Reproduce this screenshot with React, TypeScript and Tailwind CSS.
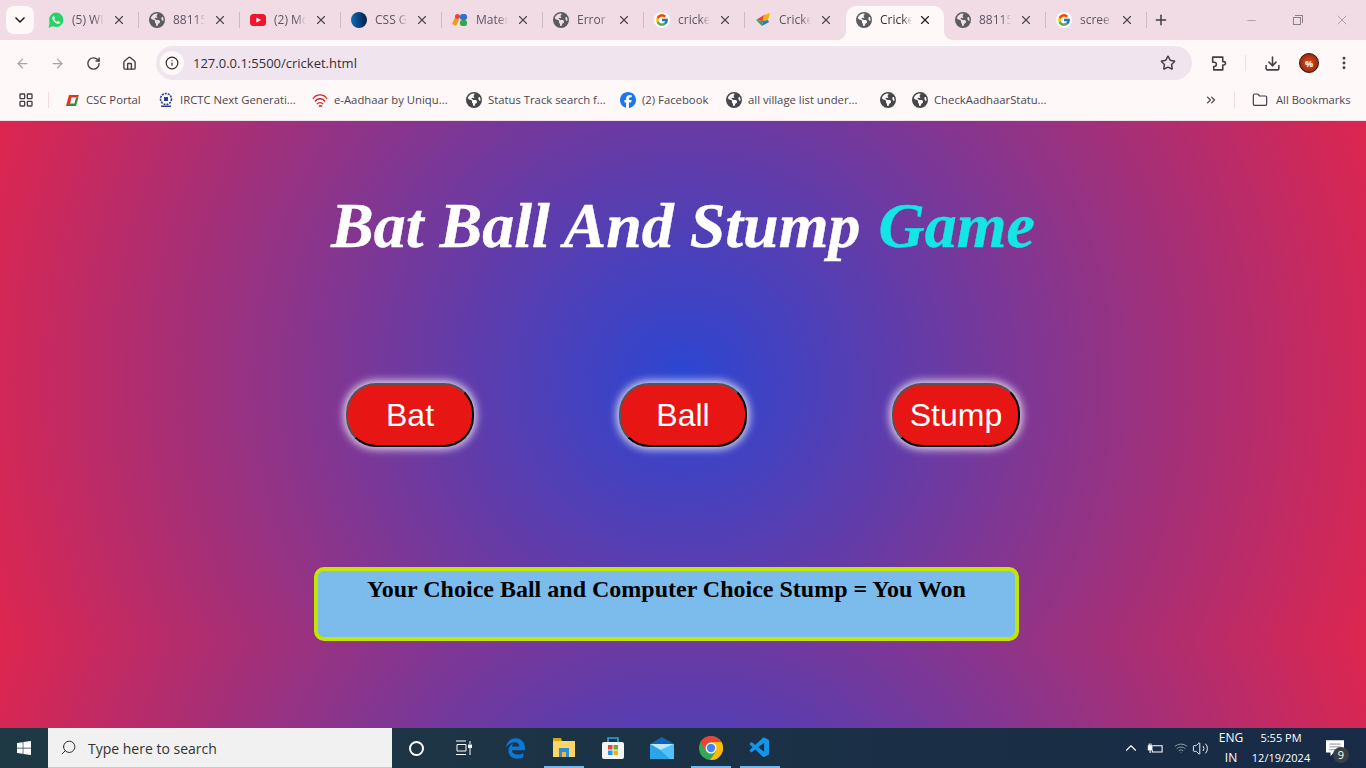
import type { ReactNode } from 'react';
import { FaEarthAmericas, FaFacebook, FaWindows, FaEdgeLegacy } from 'react-icons/fa6';
import { FcGoogle } from 'react-icons/fc';
import { VscVscode } from 'react-icons/vsc';
import {
  ArrowLeft,
  ArrowRight,
  RotateCw,
  Home,
  Info,
  Star,
  Download,
  EllipsisVertical,
  ChevronDown,
  ChevronUp,
  ChevronsRight,
  X,
  Plus,
  Minus,
  Folder,
  LayoutGrid,
  Search,
  Volume2,
  Wifi,
} from 'lucide-react';

const uiFont = "font-['Open_Sans','Noto_Sans',sans-serif]";

function Globe({ tab }: { tab?: boolean }) {
  return <FaEarthAmericas className={`w-4 h-4 shrink-0 ${tab ? 'text-[#5a5c60]' : 'text-[#45474b]'}`} />;
}

function WhatsappIcon() {
  return (
    <svg viewBox="0 0 16 16" className="w-4 h-4 shrink-0">
      <circle cx="8.2" cy="7.8" r="7.2" fill="#25d366" />
      <path d="M0.5 15.8 L1.8 10.5 L5.5 14 Z" fill="#25d366" />
      <path
        d="M5.6 4 C5 4.2 4.2 5 4.4 6.4 C4.7 8.4 7.4 11.2 9.6 11.7 C11 12 11.9 11 12 10.4 C12.1 9.9 10.5 9 10 9 C9.6 9 9.3 9.9 8.9 9.8 C8.1 9.6 6.6 8 6.4 7.2 C6.3 6.8 7.1 6.5 7.1 6.1 C7.1 5.6 6.2 3.9 5.6 4 Z"
        fill="#fff"
      />
    </svg>
  );
}

function YoutubeIcon() {
  return (
    <svg viewBox="0 0 16 16" className="w-4 h-4 shrink-0">
      <rect x="0" y="2" width="16" height="12" rx="3.5" fill="#f0142f" />
      <path d="M6.4 5.4 L11 8 L6.4 10.6 Z" fill="#fff" />
    </svg>
  );
}

function GoogleIcon() {
  return (
    <span className="w-4 h-4 rounded-full bg-white flex items-center justify-center shrink-0">
      <FcGoogle className="w-[14px] h-[14px]" />
    </span>
  );
}

function MaterialIcon() {
  return (
    <svg viewBox="0 0 16 16" className="w-4 h-4 shrink-0">
      <path d="M0 12 L4 3 L7 8 L4 14 Z" fill="#f59a1b" />
      <circle cx="5.5" cy="4.5" r="2.5" fill="#e8453c" />
      <rect x="8" y="2" width="7" height="6" rx="2.5" fill="#2d6fd6" />
      <rect x="8" y="8" width="7" height="6" rx="2.5" fill="#2ea44f" />
    </svg>
  );
}

function CrickIcon() {
  return (
    <svg viewBox="0 0 16 16" className="w-4 h-4 shrink-0">
      <path d="M1 8 L9 3 L8 9 Z" fill="#e8453c" />
      <path d="M9 3 L15 1 L13 8 L8 9 Z" fill="#f4b400" />
      <path d="M1 8 L8 9 L7 14 Z" fill="#3fa34d" />
      <path d="M8 9 L13 8 L14 10 L7 14 Z" fill="#1e7fc4" />
    </svg>
  );
}

const tabs: { icon: ReactNode; title: string; active?: boolean }[] = [
  { icon: <WhatsappIcon />, title: '(5) WI' },
  { icon: <Globe tab />, title: '88115' },
  { icon: <YoutubeIcon />, title: '(2) Mo' },
  { icon: <span className="w-4 h-4 rounded-full bg-gradient-to-r from-[#0f6cb8] to-[#03204a] shrink-0" />, title: 'CSS G' },
  { icon: <MaterialIcon />, title: 'Mater' },
  { icon: <Globe tab />, title: 'Error' },
  { icon: <GoogleIcon />, title: 'cricke' },
  { icon: <CrickIcon />, title: 'Cricke' },
  { icon: <Globe tab />, title: 'Cricke', active: true },
  { icon: <Globe tab />, title: '88115' },
  { icon: <GoogleIcon />, title: 'scree' },
];

function Tab({ icon, title, active }: { icon: ReactNode; title: string; active?: boolean }) {
  return (
    <div
      className={`relative h-[34px] flex items-center pl-[10px] pr-[12px] pb-[6px] ${
        active ? 'w-[98px] bg-[#fff8f8] rounded-t-[10px]' : 'w-[100px]'
      }`}
    >
      {icon}
      <span
        className={`ml-[8px] w-[32px] overflow-hidden whitespace-nowrap text-[12px] [mask-image:linear-gradient(to_right,black_70%,transparent)] ${
          active ? 'text-[#333]' : 'text-[#5b5560]'
        }`}
      >
        {title}
      </span>
      <X className={`ml-auto w-[14px] h-[14px] shrink-0 ${active ? 'text-[#222]' : 'text-[#4e474f]'}`} strokeWidth={2} />
      {active && (
        <>
          <span className="absolute bottom-0 -left-[8px] w-[8px] h-[8px] bg-[radial-gradient(circle_at_0_0,#f1dce6_7.5px,#fff8f8_8px)]" />
          <span className="absolute bottom-0 -right-[8px] w-[8px] h-[8px] bg-[radial-gradient(circle_at_100%_0,#f1dce6_7.5px,#fff8f8_8px)]" />
        </>
      )}
    </div>
  );
}

function TabStrip() {
  return (
    <div className="h-[40px] bg-[#f1dce6] flex items-end pl-[6px] shrink-0">
      <div className="w-[28px] h-[28px] mb-[6px] mr-[4px] bg-[#fff8f8] rounded-[8px] flex items-center justify-center">
        <ChevronDown className="w-4 h-4 text-[#222]" strokeWidth={2.5} />
      </div>
      <div className="flex items-end">
        {tabs.map((t, i) => {
          const nextActive = tabs[i + 1]?.active;
          const hideSep = t.active || nextActive;
          return (
            <div key={i} className="flex items-center">
              <Tab {...t} />
              <div className={`w-px h-[16px] mb-[6px] ${hideSep ? '' : 'bg-[#c9bcc4]'}`} />
            </div>
          );
        })}
      </div>
      <div className="h-[34px] pb-[6px] flex items-center ml-[6px]">
        <Plus className="w-[16px] h-[16px] text-[#3f3a40]" strokeWidth={2.2} />
      </div>
      <div className="ml-auto h-[40px] flex items-center pr-[16px] text-[#8a8288]">
        <Minus className="w-[13px] h-[13px]" strokeWidth={1.2} />
        <div className="relative ml-[35px] w-[8px] h-[8px] mt-[2px] border border-[#8a8288]">
          <div className="absolute -top-[3px] -right-[3px] w-[8px] h-[8px] border-t border-r border-[#8a8288]" />
        </div>
        <X className="ml-[33px] w-[16px] h-[16px]" strokeWidth={1} />
      </div>
    </div>
  );
}

function ExtensionIcon() {
  return (
    <svg viewBox="0 0 16 16" className="ml-[18px] w-[17px] h-[17px]" fill="none" stroke="#453f45" strokeWidth="1.5" strokeLinejoin="round">
      <path d="M2.5 2 H12 V6.2 H13 a1.6 1.6 0 0 1 0 3.2 H12 V14 H3.5 V10.8 H4 a2 2 0 0 0 0-4 H2.5 Z" />
    </svg>
  );
}

function AddressBar() {
  return (
    <div className="h-[46px] bg-[#fff8f8] flex items-center shrink-0">
      <ArrowLeft className="ml-[15px] w-[15px] h-[15px] text-[#a8a2a6]" strokeWidth={2} />
      <ArrowRight className="ml-[20px] w-[15px] h-[15px] text-[#a8a2a6]" strokeWidth={2} />
      <RotateCw className="ml-[21px] w-[15px] h-[15px] text-[#453f45]" strokeWidth={2.2} />
      <Home className="ml-[21px] w-[15px] h-[15px] text-[#453f45]" strokeWidth={2.2} />
      <div className="ml-[19px] w-[1036px] h-[34px] rounded-full bg-[#f0e4ee] flex items-center pl-[4px]">
        <div className="w-[24px] h-[24px] rounded-full bg-[#fff8f8] flex items-center justify-center">
          <Info className="w-[14px] h-[14px] text-[#2b272b]" strokeWidth={2} />
        </div>
        <span className="ml-[9px] mt-[1px] text-[13px] text-[#333038]">127.0.0.1:5500/cricket.html</span>
        <Star className="ml-auto mr-[16px] w-[16px] h-[16px] text-[#453f45]" strokeWidth={2.2} />
      </div>
      <ExtensionIcon />
      <div className="ml-[18px] w-px h-[16px] bg-[#f7d6e6]" />
      <Download className="ml-[18px] w-[17px] h-[17px] text-[#453f45]" strokeWidth={2.2} />
      <div className="ml-[18px] w-[20px] h-[20px] rounded-full bg-[radial-gradient(circle,#e8501c,#7a1a0c)] border border-[#3a1008] flex items-center justify-center text-[9px] font-bold text-white leading-none">
        %
      </div>
      <EllipsisVertical className="ml-[17px] w-[16px] h-[16px] text-[#453f45]" strokeWidth={2.4} />
    </div>
  );
}

const bookmarks: { icon: ReactNode; label: string; w: string }[] = [
  {
    icon: (
      <svg viewBox="0 0 16 16" className="w-4 h-4 shrink-0">
        <path d="M2 14 L5 3 L15 3 L14 5.5 L7.5 5.5 L5.5 14 Z" fill="#d9381e" />
        <path d="M4 14 L12 14 L14.5 5.5 L12 5.5 L10.5 11.5 L5 11.5 Z" fill="#2f8f3d" />
      </svg>
    ),
    label: 'CSC Portal',
    w: 'w-[56px]',
  },
  {
    icon: (
      <svg viewBox="0 0 16 16" className="w-4 h-4 shrink-0">
        <circle cx="8" cy="7" r="5.5" fill="none" stroke="#2a3f8f" strokeWidth="1.6" strokeDasharray="2 1" />
        <rect x="6" y="5" width="4" height="4" fill="#2a3f8f" />
        <rect x="3" y="13.5" width="10" height="1.5" fill="#2a3f8f" />
      </svg>
    ),
    label: 'IRCTC Next Generati...',
    w: 'w-[116px]',
  },
  {
    icon: (
      <svg viewBox="0 0 16 16" className="w-4 h-4 shrink-0" fill="none" stroke="#d8232a" strokeWidth="1.4">
        <path d="M1 7 A8 8 0 0 1 15 7" />
        <path d="M3 9.5 A6 6 0 0 1 13 9.5" />
        <path d="M5 12 A4 4 0 0 1 11 12" />
        <path d="M7 14.5 A2 2 0 0 1 10 14.5" />
      </svg>
    ),
    label: 'e-Aadhaar by Uniqu...',
    w: 'w-[116px]',
  },
  { icon: <Globe />, label: 'Status Track search f...', w: 'w-[116px]' },
  { icon: <FaFacebook className="w-4 h-4 text-[#1877f2] shrink-0" />, label: '(2) Facebook', w: 'w-[68px]' },
  { icon: <Globe />, label: 'all village list under...', w: 'w-[116px]' },
  { icon: <Globe />, label: '', w: '' },
  { icon: <Globe />, label: 'CheckAadhaarStatu...', w: 'w-[112px]' },
];

function BookmarksBar() {
  return (
    <div className="h-[35px] pb-[6px] bg-[#fff8f8] flex items-center shrink-0 border-b border-[#efe3e8]">
      <LayoutGrid className="ml-[18px] w-[16px] h-[16px] text-[#453f45]" strokeWidth={2} />
      <div className="ml-[14px] w-px h-[16px] bg-[#f7d6e6]" />
      <div className="ml-[15px] flex items-center gap-[16px]">
        {bookmarks.map((b, i) => (
          <div key={i} className="flex items-center">
            {b.icon}
            {b.label && (
              <span className={`ml-[6px] text-[11.3px] text-[#4a4650] whitespace-nowrap ${b.w}`}>{b.label}</span>
            )}
          </div>
        ))}
      </div>
      <ChevronsRight className="ml-auto w-[14px] h-[14px] text-[#453f45]" strokeWidth={2} />
      <div className="ml-[16px] w-px h-[16px] bg-[#f7d6e6]" />
      <Folder className="ml-[17px] w-[16px] h-[16px] text-[#453f45]" strokeWidth={1.8} />
      <span className="ml-[8px] mr-[14px] w-[76px] text-[11.2px] text-[#4a4650] whitespace-nowrap">All Bookmarks</span>
    </div>
  );
}

function GameButton({ label }: { label: string }) {
  return (
    <button className="w-[128px] h-[64px] rounded-[30px] bg-[#e81515] text-white text-[32px] border-2 border-black [border-style:outset] shadow-[0_0_8px_2px_rgba(255,255,255,0.85)] font-['Liberation_Sans',sans-serif]">
      {label}
    </button>
  );
}

function Game() {
  return (
    <main className="flex-1 min-h-0 bg-[radial-gradient(circle,#2b46d2,#dd254e)] bg-[size:100%_520px] flex flex-col items-center font-['Liberation_Serif',serif]">
      <h1 className="mt-[65px] h-[80px] leading-[80px] text-[64px] font-bold italic text-white whitespace-nowrap [-webkit-text-stroke:0.4px_currentColor]">
        Bat Ball And Stump <span className="ml-[2px] text-[#14e6e6]">Game</span>
      </h1>
      <div className="mt-[117px] flex gap-[145px]">
        <GameButton label="Bat" />
        <GameButton label="Ball" />
        <GameButton label="Stump" />
      </div>
      <div className="mt-[120px] -ml-[33px] w-[705px] h-[74px] rounded-[10px] border-4 border-[#c3e600] bg-[#7bbcec] text-center text-[24px] font-bold text-black leading-[28px] pt-[4px]">
        Your Choice Ball and Computer Choice Stump = You Won
      </div>
    </main>
  );
}

function FileExplorerIcon() {
  return (
    <svg viewBox="0 0 24 20" className="w-[24px] h-[20px]">
      <path d="M1 0 H9 L10 3 H1 Z" fill="#d9a21b" />
      <rect x="1" y="3" width="22" height="16" fill="#fbd567" />
      <rect x="7" y="10" width="10" height="9" fill="#2a8fd8" />
      <rect x="10" y="14" width="4" height="5" fill="#f4b93a" />
    </svg>
  );
}

function StoreIcon() {
  return (
    <svg viewBox="0 0 24 24" className="w-[24px] h-[24px]">
      <path d="M7 7 V2 H17 V7" fill="none" stroke="#2aa5e0" strokeWidth="1.6" />
      <rect x="1" y="6" width="22" height="17" rx="2" fill="#f4f4f4" />
      <rect x="7" y="9" width="4.5" height="4.5" fill="#e8453c" />
      <rect x="12.5" y="9" width="4.5" height="4.5" fill="#5cb531" />
      <rect x="7" y="14.5" width="4.5" height="4.5" fill="#1e9be8" />
      <rect x="12.5" y="14.5" width="4.5" height="4.5" fill="#f4b400" />
    </svg>
  );
}

function MailIcon() {
  return (
    <svg viewBox="0 0 24 24" className="w-[24px] h-[24px]">
      <path d="M0 8 L12 1 L24 8 V9 H0 Z" fill="#0f66b8" />
      <path d="M0 8 L12 15 L24 8 V23 H0 Z" fill="#2aa5ea" />
      <path d="M0 8 L24 8 L12 15 Z" fill="#bfe6fb" />
      <path d="M24 8 V23 H20 L10 14 Z" fill="#4fc3f7" />
    </svg>
  );
}

function ChromeIcon() {
  return (
    <svg viewBox="0 0 24 24" className="w-[24px] h-[24px]">
      <circle cx="12" cy="12" r="12" fill="#34a853" />
      <path d="M12 0 A12 12 0 0 1 22.4 6 L12 6 L6.8 15 L1.6 6 A12 12 0 0 1 12 0 Z" fill="#ea4335" />
      <path d="M22.4 6 A12 12 0 0 1 11 24 L17.2 15 L12 6 Z" fill="#fbbc05" />
      <circle cx="12" cy="12" r="5.5" fill="#fff" />
      <circle cx="12" cy="12" r="4.2" fill="#4285f4" />
    </svg>
  );
}

function TaskIcon({ children, bar, w = 'w-[40px]' }: { children: ReactNode; bar?: boolean; w?: string }) {
  return (
    <div className={`relative h-[40px] ${w} flex items-center justify-center`}>
      {children}
      {bar && <div className="absolute bottom-0 inset-x-0 h-[2px] bg-[#76b9ed]" />}
    </div>
  );
}

function Taskbar() {
  return (
    <footer className={`h-[40px] bg-gradient-to-r from-[#1f3944] to-[#182a46] flex items-center shrink-0 text-white ${uiFont}`}>
      <div className="w-[48px] flex justify-center">
        <FaWindows className="w-[16px] h-[16px]" />
      </div>
      <div className="w-[344px] h-[40px] bg-[#f1f1f1] flex items-center border-b border-[#c8c8c8]">
        <Search className="ml-[12px] w-[17px] h-[17px] text-[#222] -scale-x-100" strokeWidth={1.3} />
        <span className="ml-[11px] mt-[1px] text-[14px] text-[#333]">Type here to search</span>
      </div>
      <TaskIcon w="w-[48px]">
        <div className="w-[15px] h-[15px] rounded-full border-2 border-white" />
      </TaskIcon>
      <TaskIcon w="w-[47px]">
        <svg viewBox="0 0 16 16" className="w-[16px] h-[16px]" fill="none" stroke="#fff" strokeWidth="1">
          <path d="M0 1 H10 M1 4.5 H10 V11 H1 Z M0 14.5 H10 M14 1 V4 M14 8 V15" />
          <rect x="12.5" y="5" width="3" height="2.5" fill="#fff" />
        </svg>
      </TaskIcon>
      <div className="ml-[8px] flex items-center gap-[9px]">
        <TaskIcon>
          <FaEdgeLegacy className="w-[21px] h-[21px] text-[#0a78d4]" />
        </TaskIcon>
        <TaskIcon bar>
          <FileExplorerIcon />
        </TaskIcon>
        <TaskIcon>
          <StoreIcon />
        </TaskIcon>
        <TaskIcon>
          <MailIcon />
        </TaskIcon>
        <TaskIcon bar>
          <ChromeIcon />
        </TaskIcon>
        <TaskIcon bar>
          <VscVscode className="w-[24px] h-[24px] text-[#1595e8]" />
        </TaskIcon>
      </div>
      <div className="ml-auto flex items-center">
        <ChevronUp className="w-[18px] h-[18px]" strokeWidth={1.5} />
        <svg viewBox="0 0 18 12" className="ml-[7px] w-[16px] h-[11px]" fill="none" stroke="#fff" strokeWidth="1.2">
          <path d="M6 3 H17 V10 H6 V8" />
          <rect x="1.5" y="3" width="4" height="4.5" fill="#fff" />
          <path d="M2.5 3 V0.5 M4.5 3 V0.5 M3.5 7.5 V11" />
        </svg>
        <Wifi className="ml-[11px] w-[14px] h-[14px] text-[#9aa5ad]" strokeWidth={1.5} />
        <Volume2 className="ml-[4px] w-[17px] h-[17px]" strokeWidth={1.3} />
        <div className="ml-[10px] w-[24px] flex flex-col items-center text-[12px] leading-[20px]">
          <span>ENG</span>
          <span>IN</span>
        </div>
        <div className="ml-[5px] w-[66px] flex flex-col items-center text-[11px] leading-[20px] whitespace-nowrap">
          <span>5:55 PM</span>
          <span>12/19/2024</span>
        </div>
        <div className="relative ml-[11px] mr-[21px] w-[20px] h-[20px] flex items-center justify-center">
          <svg viewBox="0 0 16 16" className="w-[18px] h-[18px]" fill="#fff">
            <path d="M0 1 H16 V12 H7 L4 15 V12 H0 Z" />
            <path d="M3 4.5 H13 M3 7 H13 M3 9.5 H10" stroke="#6b7780" strokeWidth="0.7" />
          </svg>
          <span className="absolute -right-[4px] -bottom-[5px] w-[16px] h-[16px] rounded-full bg-[#3a3f44] text-[11px] leading-[16px] text-center">
            9
          </span>
        </div>
      </div>
    </footer>
  );
}

export default function App() {
  return (
    <div className={`h-screen w-full overflow-hidden flex flex-col ${uiFont}`}>
      <TabStrip />
      <AddressBar />
      <BookmarksBar />
      <Game />
      <Taskbar />
    </div>
  );
}
